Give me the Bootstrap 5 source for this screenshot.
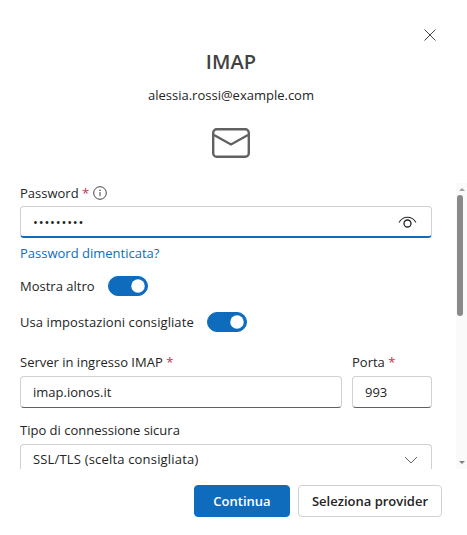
<!doctype html>
<html lang="it">
<head>
<meta charset="utf-8">
<title>IMAP</title>
<link href="https://cdn.jsdelivr.net/npm/bootstrap@5.3.0/dist/css/bootstrap.min.css" rel="stylesheet">
<style>
html,body{height:100%;overflow:hidden}
body{font-family:"Open Sans","Liberation Sans",sans-serif;font-size:13px;color:#242424;background:#fff}
.dlg-shell{height:535px;position:relative}
.dlg-close{position:absolute;top:29px;right:31px;width:12px;height:12px;line-height:0;border:0;background:none;padding:0}
.dlg-head{height:183px;padding:46px 5px 0 0}
.dlg-title{font-size:20px;font-weight:600;color:#424242;line-height:32px;margin:0;letter-spacing:.1px}
.dlg-mail{line-height:20px;margin-top:7px}
.dlg-envelope{display:block;margin:23px auto 0}
.dlg-body{height:286px;overflow:hidden}
.dlg-scroll{width:456px;padding:0 24px 0 20px;overflow:hidden}
.dlg-bar{width:11px;background:#fafafa;position:relative;flex:none}
.dlg-up,.dlg-down{position:absolute;left:3px;width:0;height:0;border-left:3px solid transparent;border-right:3px solid transparent}
.dlg-up{top:5px;border-bottom:3px solid #a0a0a0}
.dlg-down{bottom:5px;border-top:3px solid #808080}
.dlg-thumb{position:absolute;left:1px;top:12px;width:6px;height:121px;border-radius:3px;background:#8a8a8a}
.fld-label{line-height:20px;margin:0;display:block;color:#242424}
.fld-star{color:#c4314b}
.fld-input.form-control,.fld-input.form-select{height:32px;font-size:13px;color:#242424;border:1px solid #d1d1d1;border-bottom-color:#616161;border-radius:4px;padding:0 12px;box-shadow:none}
.fld-gap{margin-top:3px}
.fld-gap-lg{margin-top:4px}
.fld-input.fld-pass.form-control{height:32px;padding-right:40px;border-bottom:2px solid #0f6cbd;letter-spacing:.8px}
.fld-wrap{position:relative}
.fld-eye{position:absolute;right:15px;top:10px;width:19px;height:13px;line-height:0}
.fld-link{display:block;color:#0f6cbd;text-decoration:none;line-height:20px;margin-top:5px}
.fld-switch.form-switch{padding:0;margin:0;min-height:0;gap:13px;line-height:20px}
.fld-switch .form-check-input{width:40px;height:20px;margin:0;background-color:#0f6cbd;border-color:#0f6cbd;flex:none}
.fld-wide{letter-spacing:.08px}
.first-sw{margin-top:13px!important}
.next-sw{margin-top:16px!important}
.fld-server{margin-top:20px;gap:10px}
.fld-port{width:80px;flex:none}
.fld-tipo{margin-top:12px}
.form-select.fld-input{letter-spacing:.18px;background-image:url("data:image/svg+xml,%3csvg xmlns='http://www.w3.org/2000/svg' viewBox='0 0 14 8'%3e%3cpath fill='none' stroke='%23616161' d='M1 1l6 6 6-6'/%3e%3c/svg%3e");background-size:14px 8px;background-position:right 13px center}
.dlg-foot{padding:16px 25px 0 0;gap:8px}
.dlg-btn.btn{height:32px;font-size:13px;font-weight:600;border-radius:4px;padding:0;line-height:30px}
.dlg-primary.btn{width:96px;background:#0f6cbd;border-color:#0f6cbd;color:#fff}
.dlg-second.btn{width:144px;background:#fff;border-color:#d1d1d1;color:#242424}
.fld-info{vertical-align:-2px}
</style>
</head>
<body>
<div class="dlg-shell d-flex flex-column">
  <button class="dlg-close" type="button" aria-label="Chiudi">
    <svg width="12" height="12" viewBox="0 0 12 12"><path d="M.5.5l11 11M11.500.5l-11 11" stroke="#424242" fill="none"/></svg>
  </button>
  <div class="dlg-head text-center">
    <h1 class="dlg-title">IMAP</h1>
    <div class="dlg-mail">alessia.rossi@example.com</div>
    <svg class="dlg-envelope" width="38" height="30" viewBox="0 0 38 30"><rect x="1.200" y="1.200" width="35.600" height="27.600" rx="3.500" fill="none" stroke="#616161" stroke-width="2.400"/><path d="M2 7l17 9.500L36 7" fill="none" stroke="#616161" stroke-width="2.400"/></svg>
  </div>
  <div class="dlg-body d-flex">
    <div class="dlg-scroll">
      <label class="fld-label" for="pw">Password <span class="fld-star">*</span>
        <svg class="fld-info" width="14" height="14" viewBox="0 0 14 14"><circle cx="7" cy="7" r="6.300" fill="none" stroke="#424242"/><path d="M7 6v4.200" stroke="#424242" fill="none"/><circle cx="7" cy="4.200" r=".8" fill="#424242"/></svg>
      </label>
      <div class="fld-wrap fld-gap">
        <input id="pw" class="form-control fld-input fld-pass" type="password" value="123456789">
        <span class="fld-eye"><svg width="19" height="13" viewBox="0 0 19 13"><path d="M1 6.500C3 3 6 1.200 9.500 1.200S16 3 18 6.500" fill="none" stroke="#242424" stroke-width="1.100"/><circle cx="9.500" cy="7.500" r="3.500" fill="none" stroke="#242424" stroke-width="1.300"/></svg></span>
      </div>
      <a class="fld-link" href="#">Password dimenticata?</a>
      <div class="form-check form-switch fld-switch d-flex align-items-center first-sw">
        <label class="form-check-label" for="s1">Mostra altro</label>
        <input id="s1" class="form-check-input" type="checkbox" role="switch" checked>
      </div>
      <div class="form-check form-switch fld-switch d-flex align-items-center next-sw">
        <label class="form-check-label fld-wide" for="s2">Usa impostazioni consigliate</label>
        <input id="s2" class="form-check-input" type="checkbox" role="switch" checked>
      </div>
      <div class="d-flex fld-server">
        <div class="flex-grow-1">
          <label class="fld-label" for="srv">Server in ingresso IMAP <span class="fld-star">*</span></label>
          <input id="srv" class="form-control fld-input fld-gap-lg" value="imap.ionos.it">
        </div>
        <div class="fld-port">
          <label class="fld-label" for="port">Porta <span class="fld-star">*</span></label>
          <input id="port" class="form-control fld-input fld-gap-lg" value="993">
        </div>
      </div>
      <label class="fld-label fld-tipo" for="tipo">Tipo di connessione sicura</label>
      <select id="tipo" class="form-select fld-input fld-gap-lg"><option>SSL/TLS (scelta consigliata)</option></select>
    </div>
    <div class="dlg-bar"><span class="dlg-up"></span><span class="dlg-thumb"></span><span class="dlg-down"></span></div>
  </div>
  <div class="dlg-foot d-flex justify-content-end">
    <button class="btn dlg-btn dlg-primary" type="button">Continua</button>
    <button class="btn dlg-btn dlg-second" type="button">Seleziona provider</button>
  </div>
</div>
<script src="https://cdn.jsdelivr.net/npm/bootstrap@5.3.0/dist/js/bootstrap.bundle.min.js"></script>
</body>
</html>
